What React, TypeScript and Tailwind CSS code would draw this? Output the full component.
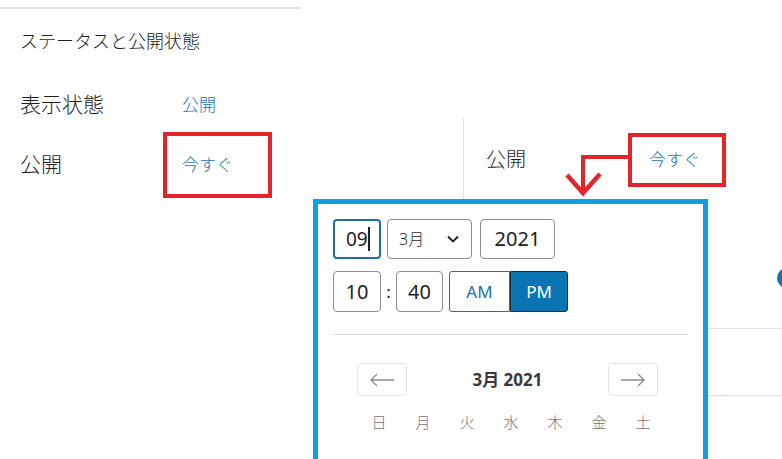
import React from 'react';

const weekDays = ['日', '月', '火', '水', '木', '金', '土'];

const font = "font-['Noto_Sans','Noto_Sans_CJK_JP',sans-serif]";

const LeftPanel = () => (
  <div className="w-[300px] shrink-0 flex flex-col">
    <div className="mt-[7px] border-t-2 border-[#e2e2e2]" />
    <div className="pl-5 pt-[20px] text-[18px] leading-[24px] font-light text-[#1e1e1e]">
      ステータスと公開状態
    </div>
    <div className="mt-[37px] flex flex-col">
      <div className="flex items-center h-[30px]">
        <div className="w-[163px] pl-5 text-[21px] font-light text-[#1e1e1e]">表示状態</div>
        <div className="pl-[19px] text-[17px] font-light text-[#2271b1]">公開</div>
      </div>
      <div className="mt-[12px] flex items-center">
        <div className="w-[163px] pl-5 text-[21px] font-light text-[#1e1e1e]">公開</div>
        <div className="w-[109px] h-[66px] border-[4px] border-[#e2242b] flex items-center pl-[15px] text-[17px] font-light text-[#2271b1]">
          今すぐ
        </div>
      </div>
    </div>
  </div>
);

const RightPanel = () => (
  <div className="flex-1 flex">
    <div className="w-[163px] shrink-0" />
    <div className="flex-1 mt-[118px] border-l border-[#e0e0e0] flex flex-col">
      <div className="flex items-center mt-[15px] pl-[22px]">
        <div className="w-[142px] text-[20px] font-light text-[#1e1e1e]">公開</div>
        <div className="w-[98px] h-[54px] border-[4px] border-[#e2242b] flex items-center pl-[17px] text-[17px] font-light text-[#2271b1]">
          今すぐ
        </div>
      </div>
      <div className="h-[220px] flex flex-col">
        <div className="mt-[81px] flex justify-end">
          <div className="w-[20px] h-[20px] rounded-full bg-[#1d6fb0] -mr-[15px]" />
        </div>
        <div className="mt-[40px] border-t border-[#e0e0e0]" />
        <div className="mt-[66px] border-t border-[#e0e0e0]" />
      </div>
    </div>
  </div>
);

const Chevron = () => (
  <svg width="14" height="14" viewBox="0 0 14 14" fill="none">
    <path d="M2 4.5 L7 9.5 L12 4.5" stroke="#1e1e1e" strokeWidth="1.8" />
  </svg>
);

const Arrow = ({ dir }: { dir: 'left' | 'right' }) => (
  <svg width="26" height="14" viewBox="0 0 26 14" fill="none">
    {dir === 'left' ? (
      <path d="M25 7 H2 M8 1 L2 7 L8 13" stroke="#8a8a8a" strokeWidth="1.3" />
    ) : (
      <path d="M1 7 H24 M18 1 L24 7 L18 13" stroke="#8a8a8a" strokeWidth="1.3" />
    )}
  </svg>
);

const DatePopover = () => (
  <div className="absolute left-[313px] top-[199px] w-[395px] h-[280px] border-[5px] border-[#0ca2e2] bg-white px-[15px] pt-[15px]">
    <div className="flex items-center">
      <div className="w-[48px] h-[40px] rounded-[4px] border-2 border-[#1f6f9f] flex items-center pl-[11px] text-[19px] text-[#1e1e1e]">
        09<span className="w-[2px] h-[24px] bg-[#1e1e1e]" />
      </div>
      <div className="ml-[6px] w-[85px] h-[40px] rounded-[4px] border border-[#8c8f94] flex items-center justify-between pl-[11px] pr-[11px] text-[16px] font-light text-[#1e1e1e]">
        3月
        <Chevron />
      </div>
      <div className="ml-[8px] w-[75px] h-[40px] rounded-[4px] border border-[#8c8f94] flex items-center justify-center text-[20px] text-[#1e1e1e]">
        2021
      </div>
    </div>
    <div className="mt-[12px] flex items-center">
      <div className="w-[48px] h-[41px] rounded-[4px] border border-[#8c8f94] flex items-center justify-center text-[20px] text-[#1e1e1e]">
        10
      </div>
      <div className="w-[15px] text-center text-[17px] text-[#1e1e1e]">:</div>
      <div className="w-[47px] h-[41px] rounded-[4px] border border-[#8c8f94] flex items-center justify-center text-[20px] text-[#1e1e1e]">
        40
      </div>
      <div className="ml-[6px] flex h-[41px]">
        <div className="w-[61px] rounded-l-[3px] border border-[#1d73aa] flex items-center justify-center text-[17px] text-[#1d73aa]">
          AM
        </div>
        <div className="w-[58px] rounded-r-[3px] border border-[#1e2a33] bg-[#0a75b3] flex items-center justify-center text-[17px] text-white">
          PM
        </div>
      </div>
    </div>
    <div className="mt-[22px] border-t border-[#dcdcdc]" />
    <div className="mt-[28px] pl-[24px] pr-[30px] flex items-center justify-between">
      <div className="w-[50px] h-[33px] rounded-[4px] border border-[#e6e6e6] flex items-center justify-center">
        <Arrow dir="left" />
      </div>
      <div className="text-[17px] font-bold text-[#3a3a3a]">3月 2021</div>
      <div className="w-[50px] h-[33px] rounded-[4px] border border-[#e6e6e6] flex items-center justify-center">
        <Arrow dir="right" />
      </div>
    </div>
    <div className="mt-[15px] pl-[24px] flex">
      {weekDays.map((d) => (
        <div key={d} className="w-[44px] text-center text-[15px] font-light text-[#757575]">
          {d}
        </div>
      ))}
    </div>
  </div>
);

const RedArrow = () => (
  <svg
    className="absolute left-[560px] top-[150px]"
    width="72"
    height="50"
    viewBox="0 0 72 50"
    fill="none"
  >
    <path d="M70 7 H23 V42" stroke="#e2242b" strokeWidth="4" />
    <path d="M7 25 L23 43 L40 24" stroke="#e2242b" strokeWidth="4.5" />
  </svg>
);

export default function App() {
  return (
    <div className={`relative w-[782px] h-[459px] overflow-hidden bg-white flex ${font}`}>
      <LeftPanel />
      <RightPanel />
      <RedArrow />
      <DatePopover />
    </div>
  );
}
